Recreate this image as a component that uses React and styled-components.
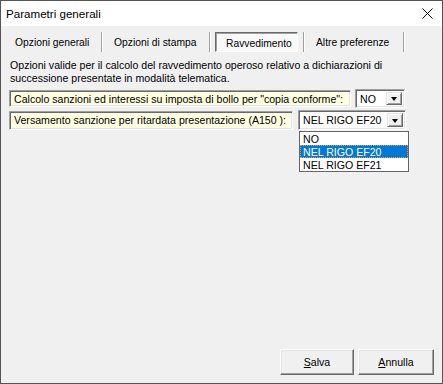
import React from 'react';
import styled, { createGlobalStyle } from 'styled-components';

const GlobalStyle = createGlobalStyle`
    html, body {
        margin: 0;
        padding: 0;
        background: #ffffff;
    }
`;

const Window = styled.div`
    box-sizing: border-box;
    width: 443px;
    height: 384px;
    border: 1px solid #555555;
    background: #f0f0f0;
    display: flex;
    flex-direction: column;
    font-family: "Liberation Sans", Arial, sans-serif;
    color: #000000;
    position: relative;
`;

const TitleBar = styled.div`
    height: 25px;
    background: #ffffff;
    display: flex;
    align-items: center;
    justify-content: space-between;
    padding: 0 9px 0 5px;
    font-size: 11.6px;
`;

const Body = styled.div`
    flex: 1;
    display: flex;
    flex-direction: column;
    padding: 6px 0 8px 0;
`;

const TabStrip = styled.div`
    display: flex;
    align-items: stretch;
    height: 20px;
    padding-left: 3px;
`;

const Tab = styled.div`
    box-sizing: border-box;
    width: ${({$w}) => $w}px;
    padding-left: ${({$pad}) => $pad}px;
    margin-left: ${({$ml}) => $ml || 0}px;
    margin-right: ${({$mr}) => $mr || 0}px;
    display: flex;
    align-items: center;
    font-size: 10.3px;
    white-space: nowrap;
    border: 1px solid transparent;
    ${({$active}) => $active && `
        border-color: #696969 #ffffff #ffffff #696969;
        box-shadow: inset 1px 1px 0 #a0a0a0;
        background: #f8f8f8;
        padding-top: 2px;
    `}
`;

const TabSep = styled.div`
    width: 1px;
    border-right: 1px solid #ffffff;
    background: #a0a0a0;
    margin: 0 2px;
`;

const Description = styled.div`
    margin: 7px 0 0 9px;
    font-size: 10.6px;
    line-height: 13px;
`;

const Rows = styled.div`
    display: flex;
    flex-direction: column;
    gap: 2px;
    margin: 4px 0 0 8px;
    position: relative;
`;

const Row = styled.div`
    display: flex;
    align-items: center;
    gap: ${({$gap}) => $gap}px;
    height: ${({$h}) => $h}px;
`;

const LabelBox = styled.div`
    box-sizing: border-box;
    width: ${({$w}) => $w}px;
    height: ${({$h}) => $h}px;
    background: #ffffe1;
    border-style: solid;
    border-width: 1px;
    border-color: #a0a0a0 #ffffff #ffffff #a0a0a0;
    box-shadow: inset 1px 1px 0 #696969, inset -1px -1px 0 #e3e3e3;
    display: flex;
    align-items: center;
    padding-left: 4px;
    font-size: 10.6px;
    white-space: nowrap;
`;

const Combo = styled.div`
    box-sizing: border-box;
    width: ${({$w}) => $w}px;
    height: ${({$h}) => $h}px;
    background: #ffffff;
    border-style: solid;
    border-width: 1px;
    border-color: #a0a0a0 #ffffff #ffffff #a0a0a0;
    box-shadow: inset 1px 1px 0 #696969, inset -1px -1px 0 #e3e3e3;
    display: flex;
    align-items: stretch;
    padding: 2px;
    font-size: 10.6px;
`;

const ComboText = styled.div`
    flex: 1;
    display: flex;
    align-items: center;
    padding-left: 2px;
    white-space: nowrap;
`;

const ComboButton = styled.div`
    box-sizing: border-box;
    width: 16px;
    background: #f0f0f0;
    border-style: solid;
    border-width: 1px;
    border-color: #e3e3e3 #696969 #696969 #e3e3e3;
    box-shadow: inset 1px 1px 0 #ffffff, inset -1px -1px 0 #a0a0a0;
    display: flex;
    align-items: center;
    justify-content: center;

    &::after {
        content: '';
        width: 0;
        height: 0;
        border-left: 3.5px solid transparent;
        border-right: 3.5px solid transparent;
        border-top: 4px solid #000000;
        margin-top: 1px;
    }
`;

const DropList = styled.div`
    position: absolute;
    left: 290px;
    top: 42px;
    width: 110px;
    box-sizing: border-box;
    border: 1px solid #646464;
    background: #ffffff;
    font-size: 10.6px;
    display: flex;
    flex-direction: column;
`;

const DropItem = styled.div`
    box-sizing: border-box;
    height: 13px;
    padding-left: 2px;
    display: flex;
    align-items: center;
    white-space: nowrap;
    border: 1px solid transparent;
    ${({$selected}) => $selected && `
        background: #0078d7;
        color: #ffffff;
        border: 1px dotted #f49a2c;
    `}
`;

const Footer = styled.div`
    margin-top: auto;
    display: flex;
    justify-content: flex-end;
    gap: 4px;
    padding-right: 8px;
`;

const Button = styled.button`
    box-sizing: border-box;
    width: ${({$w}) => $w}px;
    height: 26px;
    background: #f0f0f0;
    border-style: solid;
    border-width: 1px;
    border-color: #ffffff #696969 #696969 #ffffff;
    box-shadow: inset -1px -1px 0 #a0a0a0, inset 1px 1px 0 #e3e3e3;
    font-family: "Liberation Sans", Arial, sans-serif;
    font-size: 10.6px;
    color: #000000;
    padding: 0;
    cursor: pointer;

    u {
        text-decoration: underline;
        text-underline-offset: 1px;
    }
`;

const CloseIcon = () => (
    <svg width="11" height="11" viewBox="0 0 11 11">
        <path d="M0.5 0.5 L10.5 10.5 M10.5 0.5 L0.5 10.5" stroke="#000000" strokeWidth="1" />
    </svg>
);

const tabs = [
    {label: 'Opzioni generali', w: 95, pad: 10},
    {label: 'Opzioni di stampa', w: 102, pad: 8},
    {label: 'Ravvedimento', w: 83, pad: 10, active: true, ml: 2, mr: 3},
    {label: 'Altre preferenze', w: 94, pad: 8},
];

const App = () => (
    <>
        <GlobalStyle />
        <Window>
            <TitleBar>
                <span>Parametri generali</span>
                <CloseIcon />
            </TitleBar>
            <Body>
                <TabStrip>
                    {tabs.map((t) => (
                        <React.Fragment key={t.label}>
                            <Tab $w={t.w} $pad={t.pad} $active={t.active} $ml={t.ml} $mr={t.mr}>
                                {t.label}
                            </Tab>
                            <TabSep />
                        </React.Fragment>
                    ))}
                </TabStrip>
                <Description>
                    Opzioni valide per il calcolo del ravvedimento operoso relativo a dichiarazioni di<br />
                    successione presentate in modalità telematica.
                </Description>
                <Rows>
                    <Row $gap={4} $h={19}>
                        <LabelBox $w={342} $h={17}>
                            Calcolo sanzioni ed interessi su imposta di bollo per "copia conforme":
                        </LabelBox>
                        <Combo $w={50} $h={19}>
                            <ComboText>NO</ComboText>
                            <ComboButton />
                        </Combo>
                    </Row>
                    <Row $gap={5} $h={20}>
                        <LabelBox $w={284} $h={19}>
                            Versamento sanzione per ritardata presentazione (A150 ):
                        </LabelBox>
                        <Combo $w={108} $h={20}>
                            <ComboText>NEL RIGO EF20</ComboText>
                            <ComboButton />
                        </Combo>
                    </Row>
                    <DropList>
                        <DropItem>NO</DropItem>
                        <DropItem $selected>NEL RIGO EF20</DropItem>
                        <DropItem>NEL RIGO EF21</DropItem>
                    </DropList>
                </Rows>
                <Footer>
                    <Button $w={74}><u>S</u>alva</Button>
                    <Button $w={76}><u>A</u>nnulla</Button>
                </Footer>
            </Body>
        </Window>
    </>
);

export default App;
